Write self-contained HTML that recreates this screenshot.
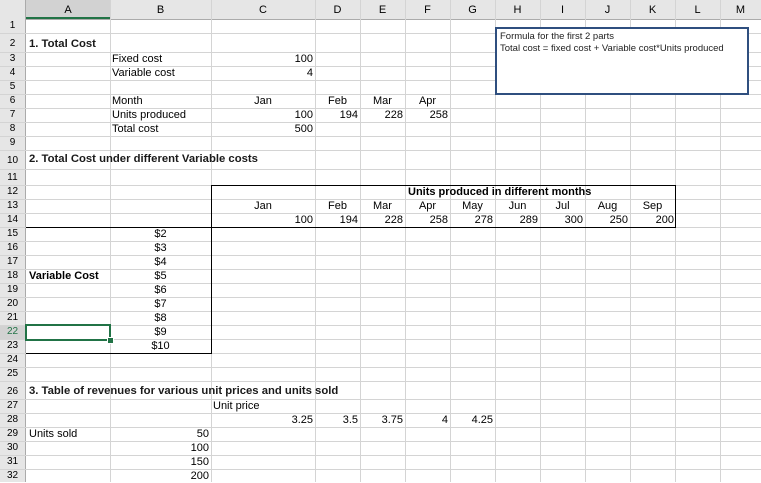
<!DOCTYPE html>
<html><head><meta charset="utf-8"><style>
body{margin:0;width:761px;height:482px;overflow:hidden;background:#fff;font-family:"Liberation Sans",sans-serif;font-size:11px;color:#000;position:relative}
.v{position:absolute;width:1px;background:#d4d4d4}
.h{position:absolute;height:1px;background:#d4d4d4}
.t{position:absolute;white-space:nowrap;line-height:14px}
.r{text-align:right}
.c{text-align:center}
.b{font-weight:bold;font-size:11.3px}
.hd{position:absolute;background:#e6e6e6;color:#333;font-size:11px;text-align:center}
.bk{position:absolute;background:#000}
</style></head><body>
<div class="hd" style="left:0;top:0;width:761px;height:19px;border-bottom:1px solid #ababab"></div>
<div class="hd" style="left:0;top:19px;width:25px;height:463px;border-right:1px solid #ababab"></div>
<div class="hd" style="left:26px;top:0;width:84px;height:17px;background:#d2d2d2;border-bottom:2px solid #217346"></div>
<div class="hd" style="left:0;top:325px;width:25px;height:14px;background:#d2d2d2;color:#217346"></div>
<div style="position:absolute;left:0;top:0">
<div class="t c" style="left:26px;top:3px;width:84px">A</div>
<div class="t c" style="left:110px;top:3px;width:101px">B</div>
<div class="t c" style="left:211px;top:3px;width:104px">C</div>
<div class="t c" style="left:315px;top:3px;width:45px">D</div>
<div class="t c" style="left:360px;top:3px;width:45px">E</div>
<div class="t c" style="left:405px;top:3px;width:45px">F</div>
<div class="t c" style="left:450px;top:3px;width:45px">G</div>
<div class="t c" style="left:495px;top:3px;width:45px">H</div>
<div class="t c" style="left:540px;top:3px;width:45px">I</div>
<div class="t c" style="left:585px;top:3px;width:45px">J</div>
<div class="t c" style="left:630px;top:3px;width:45px">K</div>
<div class="t c" style="left:675px;top:3px;width:45px">L</div>
<div class="t c" style="left:720px;top:3px;width:41px">M</div>
</div>
<div class="v" style="left:25px;top:0;height:19px;background:#ababab"></div>
<div class="v" style="left:110px;top:0;height:482px"></div>
<div class="v" style="left:211px;top:0;height:482px"></div>
<div class="v" style="left:315px;top:0;height:482px"></div>
<div class="v" style="left:360px;top:0;height:482px"></div>
<div class="v" style="left:405px;top:0;height:482px"></div>
<div class="v" style="left:450px;top:0;height:482px"></div>
<div class="v" style="left:495px;top:0;height:482px"></div>
<div class="v" style="left:540px;top:0;height:482px"></div>
<div class="v" style="left:585px;top:0;height:482px"></div>
<div class="v" style="left:630px;top:0;height:482px"></div>
<div class="v" style="left:675px;top:0;height:482px"></div>
<div class="v" style="left:720px;top:0;height:482px"></div>
<div class="h" style="left:0;top:33px;width:761px"></div>
<div class="h" style="left:0;top:52px;width:761px"></div>
<div class="h" style="left:0;top:66px;width:761px"></div>
<div class="h" style="left:0;top:80px;width:761px"></div>
<div class="h" style="left:0;top:94px;width:761px"></div>
<div class="h" style="left:0;top:108px;width:761px"></div>
<div class="h" style="left:0;top:122px;width:761px"></div>
<div class="h" style="left:0;top:136px;width:761px"></div>
<div class="h" style="left:0;top:150px;width:761px"></div>
<div class="h" style="left:0;top:169px;width:761px"></div>
<div class="h" style="left:0;top:185px;width:761px"></div>
<div class="h" style="left:0;top:199px;width:761px"></div>
<div class="h" style="left:0;top:213px;width:761px"></div>
<div class="h" style="left:0;top:227px;width:761px"></div>
<div class="h" style="left:0;top:241px;width:761px"></div>
<div class="h" style="left:0;top:255px;width:761px"></div>
<div class="h" style="left:0;top:269px;width:761px"></div>
<div class="h" style="left:0;top:283px;width:761px"></div>
<div class="h" style="left:0;top:297px;width:761px"></div>
<div class="h" style="left:0;top:311px;width:761px"></div>
<div class="h" style="left:0;top:325px;width:761px"></div>
<div class="h" style="left:0;top:339px;width:761px"></div>
<div class="h" style="left:0;top:353px;width:761px"></div>
<div class="h" style="left:0;top:367px;width:761px"></div>
<div class="h" style="left:0;top:381px;width:761px"></div>
<div class="h" style="left:0;top:399px;width:761px"></div>
<div class="h" style="left:0;top:413px;width:761px"></div>
<div class="h" style="left:0;top:427px;width:761px"></div>
<div class="h" style="left:0;top:441px;width:761px"></div>
<div class="h" style="left:0;top:455px;width:761px"></div>
<div class="h" style="left:0;top:469px;width:761px"></div>
<div class="t c" style="left:0;width:25px;top:19px;font-size:10px">1</div>
<div class="t c" style="left:0;width:25px;top:37px;font-size:10px">2</div>
<div class="t c" style="left:0;width:25px;top:52px;font-size:10px">3</div>
<div class="t c" style="left:0;width:25px;top:66px;font-size:10px">4</div>
<div class="t c" style="left:0;width:25px;top:80px;font-size:10px">5</div>
<div class="t c" style="left:0;width:25px;top:94px;font-size:10px">6</div>
<div class="t c" style="left:0;width:25px;top:108px;font-size:10px">7</div>
<div class="t c" style="left:0;width:25px;top:122px;font-size:10px">8</div>
<div class="t c" style="left:0;width:25px;top:136px;font-size:10px">9</div>
<div class="t c" style="left:0;width:25px;top:154px;font-size:10px">10</div>
<div class="t c" style="left:0;width:25px;top:171px;font-size:10px">11</div>
<div class="t c" style="left:0;width:25px;top:185px;font-size:10px">12</div>
<div class="t c" style="left:0;width:25px;top:199px;font-size:10px">13</div>
<div class="t c" style="left:0;width:25px;top:213px;font-size:10px">14</div>
<div class="t c" style="left:0;width:25px;top:227px;font-size:10px">15</div>
<div class="t c" style="left:0;width:25px;top:241px;font-size:10px">16</div>
<div class="t c" style="left:0;width:25px;top:255px;font-size:10px">17</div>
<div class="t c" style="left:0;width:25px;top:269px;font-size:10px">18</div>
<div class="t c" style="left:0;width:25px;top:283px;font-size:10px">19</div>
<div class="t c" style="left:0;width:25px;top:297px;font-size:10px">20</div>
<div class="t c" style="left:0;width:25px;top:311px;font-size:10px">21</div>
<div class="t c" style="left:0;width:25px;top:325px;font-size:10px;color:#217346">22</div>
<div class="t c" style="left:0;width:25px;top:339px;font-size:10px">23</div>
<div class="t c" style="left:0;width:25px;top:353px;font-size:10px">24</div>
<div class="t c" style="left:0;width:25px;top:367px;font-size:10px">25</div>
<div class="t c" style="left:0;width:25px;top:385px;font-size:10px">26</div>
<div class="t c" style="left:0;width:25px;top:399px;font-size:10px">27</div>
<div class="t c" style="left:0;width:25px;top:413px;font-size:10px">28</div>
<div class="t c" style="left:0;width:25px;top:427px;font-size:10px">29</div>
<div class="t c" style="left:0;width:25px;top:441px;font-size:10px">30</div>
<div class="t c" style="left:0;width:25px;top:455px;font-size:10px">31</div>
<div class="t c" style="left:0;width:25px;top:469px;font-size:10px">32</div>

<div class="t b" style="left:29px;top:37px;color:#1a1a1a">1. Total Cost</div>
<div class="t" style="left:112px;top:52px">Fixed cost</div>
<div class="t r" style="left:211px;width:102px;top:52px">100</div>
<div class="t" style="left:112px;top:66px">Variable cost</div>
<div class="t r" style="left:211px;width:102px;top:66px">4</div>
<div class="t" style="left:112px;top:94px">Month</div>
<div class="t c" style="left:211px;width:104px;top:94px">Jan</div>
<div class="t c" style="left:315px;width:45px;top:94px">Feb</div>
<div class="t c" style="left:360px;width:45px;top:94px">Mar</div>
<div class="t c" style="left:405px;width:45px;top:94px">Apr</div>
<div class="t" style="left:112px;top:108px">Units produced</div>
<div class="t r" style="left:211px;width:102px;top:108px">100</div>
<div class="t r" style="left:315px;width:43px;top:108px">194</div>
<div class="t r" style="left:360px;width:43px;top:108px">228</div>
<div class="t r" style="left:405px;width:43px;top:108px">258</div>
<div class="t" style="left:112px;top:122px">Total cost</div>
<div class="t r" style="left:211px;width:102px;top:122px">500</div>

<div style="position:absolute;left:495px;top:27px;width:250px;height:64px;background:#fff;border:2px solid #2f4f7f"></div>
<div class="t" style="left:500px;top:31px;font-size:9.5px;line-height:12px;color:#222">Formula for the first 2 parts<br>Total cost = fixed cost + Variable cost*Units produced</div>

<div class="t b" style="left:29px;top:152px;color:#1a1a1a">2. Total Cost under different Variable costs</div>
<div class="bk" style="left:211px;top:185px;width:465px;height:1px"></div>
<div class="bk" style="left:675px;top:185px;width:1px;height:43px"></div>
<div class="bk" style="left:26px;top:227px;width:650px;height:1px"></div>
<div class="bk" style="left:211px;top:185px;width:1px;height:169px"></div>
<div class="bk" style="left:26px;top:353px;width:186px;height:1px"></div>
<div class="t b" style="left:408px;top:185px;font-size:11px">Units produced in different months</div>
<div class="t c" style="left:211px;width:104px;top:199px">Jan</div>
<div class="t c" style="left:315px;width:45px;top:199px">Feb</div>
<div class="t c" style="left:360px;width:45px;top:199px">Mar</div>
<div class="t c" style="left:405px;width:45px;top:199px">Apr</div>
<div class="t c" style="left:450px;width:45px;top:199px">May</div>
<div class="t c" style="left:495px;width:45px;top:199px">Jun</div>
<div class="t c" style="left:540px;width:45px;top:199px">Jul</div>
<div class="t c" style="left:585px;width:45px;top:199px">Aug</div>
<div class="t c" style="left:630px;width:45px;top:199px">Sep</div>
<div class="t r" style="left:211px;width:102px;top:213px">100</div>
<div class="t r" style="left:315px;width:43px;top:213px">194</div>
<div class="t r" style="left:360px;width:43px;top:213px">228</div>
<div class="t r" style="left:405px;width:43px;top:213px">258</div>
<div class="t r" style="left:450px;width:43px;top:213px">278</div>
<div class="t r" style="left:495px;width:43px;top:213px">289</div>
<div class="t r" style="left:540px;width:43px;top:213px">300</div>
<div class="t r" style="left:585px;width:43px;top:213px">250</div>
<div class="t r" style="left:630px;width:44px;top:213px">200</div>
<div class="t c" style="left:110px;width:101px;top:227px">$2</div>
<div class="t c" style="left:110px;width:101px;top:241px">$3</div>
<div class="t c" style="left:110px;width:101px;top:255px">$4</div>
<div class="t c" style="left:110px;width:101px;top:269px">$5</div>
<div class="t c" style="left:110px;width:101px;top:283px">$6</div>
<div class="t c" style="left:110px;width:101px;top:297px">$7</div>
<div class="t c" style="left:110px;width:101px;top:311px">$8</div>
<div class="t c" style="left:110px;width:101px;top:325px">$9</div>
<div class="t c" style="left:110px;width:101px;top:339px">$10</div>
<div class="t b" style="left:29px;top:269px;font-size:11px">Variable Cost</div>
<div style="position:absolute;left:25px;top:324px;width:82px;height:13px;border:2px solid #217346;background:#fff"></div>
<div style="position:absolute;left:107px;top:337px;width:5px;height:5px;background:#217346;border:1px solid #fff"></div>

<div class="t b" style="left:29px;top:384px;color:#1a1a1a">3. Table of revenues for various unit prices and units sold</div>
<div class="t" style="left:213px;top:399px">Unit price</div>
<div class="t r" style="left:211px;width:102px;top:413px">3.25</div>
<div class="t r" style="left:315px;width:43px;top:413px">3.5</div>
<div class="t r" style="left:360px;width:43px;top:413px">3.75</div>
<div class="t r" style="left:405px;width:43px;top:413px">4</div>
<div class="t r" style="left:450px;width:43px;top:413px">4.25</div>
<div class="t" style="left:29px;top:427px">Units sold</div>
<div class="t r" style="left:110px;width:99px;top:427px">50</div>
<div class="t r" style="left:110px;width:99px;top:441px">100</div>
<div class="t r" style="left:110px;width:99px;top:455px">150</div>
<div class="t r" style="left:110px;width:99px;top:469px">200</div>
</body></html>
